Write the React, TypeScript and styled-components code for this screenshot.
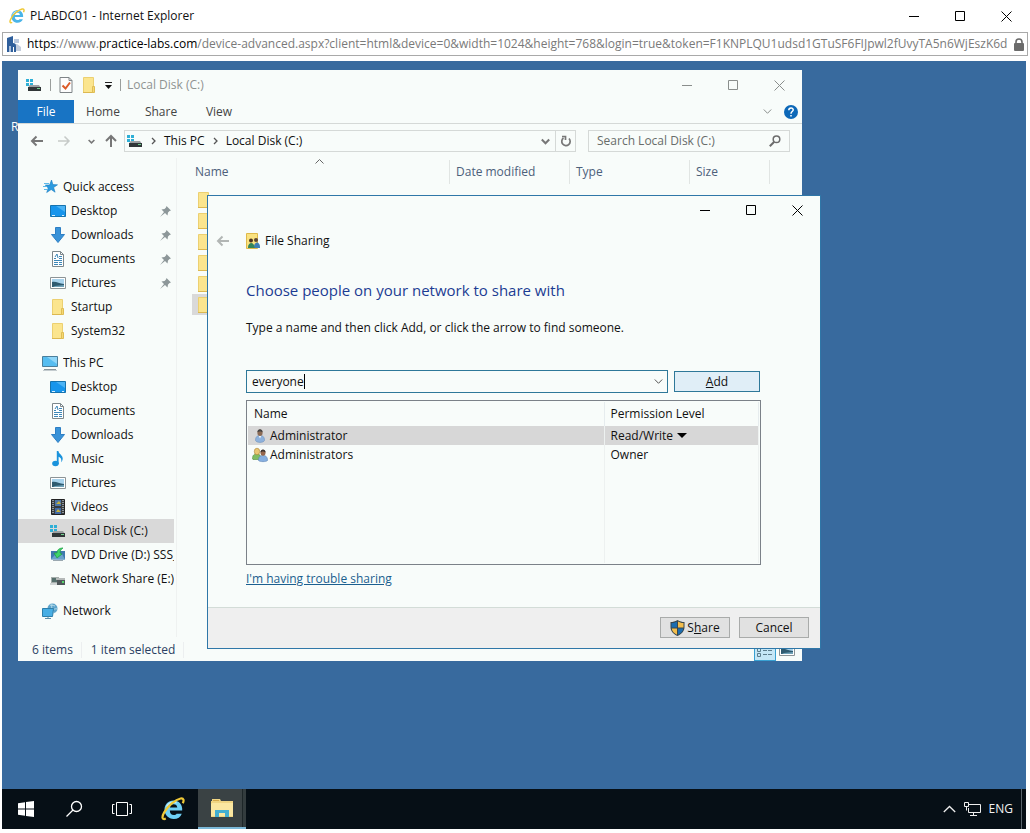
import React, { useState } from "react";
import styled, { createGlobalStyle, css } from "styled-components";

const FONT = `"Open Sans", "Noto Sans", "Liberation Sans", sans-serif`;

const GlobalStyle = createGlobalStyle`
  *, *::before, *::after { box-sizing: border-box; }
  body { margin: 0; background: #fff; }
  body, button, input, select, table { font-family: ${FONT}; font-size: 12px; line-height: 16px; color: #111; }
  button { border: 0; padding: 0; background: none; }
  svg { display: block; flex: none; }
`;

/* ---------- icons ---------- */

const IeLogo = ({ size = 16, tone = "#49b4e8" }: { size?: number; tone?: string }) => (
  <svg width={size} height={size} viewBox="0 0 24 24" fill="none">
    <path d="M3.600 13.600H21.200C21.800 7.200 17.800 3.400 12.600 3.400 7.400 3.400 3.500 7.300 3.500 12.600S7.400 22 12.700 22c4 0 6.800-2 8.100-5.300h-5.200c-.7 1-1.500 1.400-2.800 1.400-2.300 0-3.900-1.500-4-4.500M8.900 10.600c.3-2.100 1.700-3.300 3.800-3.300s3.400 1.200 3.600 3.300z" fill={tone} fillRule="evenodd" />
    <path d="M5.500 9.500c1.500-3.500 5.800-5.300 10-3.800" stroke="#c4ebfa" strokeWidth="1.500" />
    <path d="M4.800 21.600C1.300 23.200.3 20.500 3.200 15.400 6.900 8.900 14.500 2.700 19.600 1.500c3.200-.6 3.600 1.700 2.200 4.800" stroke="#efc937" strokeWidth="2.200" />
  </svg>
);

const SiteIcon = () => (
  <svg width="14" height="16" viewBox="0 0 14 16">
    <path d="M0 2l6-2v16H0z" fill="#2f5f9c" />
    <path d="M7 3h5v4H7z" fill="#b9c8de" />
    <path d="M7 8h3l4 3v4H9v-4H7z" fill="#c3cddd" />
    <path d="M6 7c2 0 3 1 3 3v6H7v-5H6z" fill="#2f5f9c" />
    <path d="M2 10h2v6H2z" fill="#a9bedb" />
  </svg>
);

const LockIcon = () => (
  <svg width="10" height="13" viewBox="0 0 10 13">
    <path d="M2 6V4a3 3 0 0 1 6 0v2" stroke="#6b6b6b" strokeWidth="1.600" fill="none" />
    <rect y="5" width="10" height="8" rx="1" fill="#6b6b6b" />
  </svg>
);

const MinimizeGlyph = () => (
  <svg width="10" height="10" viewBox="0 0 10 10"><path d="M0 5.500h10" stroke="currentColor" /></svg>
);
const MaximizeGlyph = () => (
  <svg width="10" height="10" viewBox="0 0 10 10"><path d="M.5.5h9v9h-9z" stroke="currentColor" fill="none" /></svg>
);
const CloseGlyph = () => (
  <svg width="11" height="11" viewBox="0 0 11 11"><path d="M.5.5l10 10M10.500.5l-10 10" stroke="currentColor" /></svg>
);

const DriveIcon = () => (
  <svg width="16" height="16" viewBox="0 0 16 16">
    <path d="M0 2h3v3H0zM4 2h3v3H4zM0 6h3v3H0zM4 6h3v3H4z" fill="#2eafd6" />
    <path d="M3.500 8H13l2 3H2z" fill="#9ba0a2" />
    <rect x="2" y="10" width="13" height="4" fill="#303638" />
    <rect x="11" y="11" width="3" height="1" fill="#6fd08c" />
  </svg>
);

const PropertiesIcon = () => (
  <svg width="14" height="16" viewBox="0 0 14 16">
    <path d="M1 .5h9l3 3v12H1z" fill="#fdfdfd" stroke="#7e8487" />
    <path d="M10 .5v3h3" fill="none" stroke="#7e8487" />
    <path d="M3.500 8.500l3 3 4.500-6" fill="none" stroke="#dc5a27" strokeWidth="2" />
  </svg>
);

const FolderIcon = () => (
  <svg width="16" height="16" viewBox="0 0 16 16">
    <path d="M2.500.5h10v15h-10z" fill="#fbe58e" stroke="#ecd071" />
    <path d="M2 15.500h11" stroke="#dcb850" />
    <path d="M11.500 9.500h2v6h-2z" fill="#f6d973" stroke="#dfbd55" />
  </svg>
);

const StarIcon = () => (
  <svg width="16" height="16" viewBox="0 0 16 16">
    <path d="M9.500 1l1.400 4.600 4.600.2-3.900 2.700 1.500 4.700-3.900-2.700L4.700 13.500 6.200 9 3.300 6h4.300z" fill="#2c9be0" stroke="#1a7cc0" strokeWidth=".6" />
    <path d="M2 4.500h5M1 7.500h4M2 10.500h3" stroke="#5bb9ea" strokeWidth="1" />
  </svg>
);

const DesktopIcon = () => (
  <svg width="16" height="16" viewBox="0 0 16 16">
    <path d="M.5 2.500h15v11H.5z" fill="#1795ec" stroke="#1673ae" />
    <path d="M6 3h9v6z" fill="#4bb3f5" />
    <path d="M2 12.500h3M12 12.500h2" stroke="#d5efff" />
  </svg>
);

const DownloadIcon = () => (
  <svg width="16" height="16" viewBox="0 0 16 16">
    <path d="M5.500.5h5v7h4L8 15.500 1.500 7.500h4z" fill="#3a93d8" stroke="#2d7fc4" />
  </svg>
);

const DocumentIcon = () => (
  <svg width="16" height="16" viewBox="0 0 16 16">
    <path d="M2.500.5h8l3 3v12h-11z" fill="#fff" stroke="#7d888c" />
    <path d="M10.500.5v3h3" fill="none" stroke="#7d888c" />
    <path d="M4 7.500h2M4 9.500h8M4 11.500h4M9 11.500h3M4 13.500h4M9 13.500h3M9 5.500h3M9 7.500h3" stroke="#3d88b8" />
    <path d="M5 6l2-3 1 4" fill="none" stroke="#3d88b8" />
  </svg>
);

const PictureIcon = () => (
  <svg width="16" height="16" viewBox="0 0 16 16">
    <path d="M.5 2.500h15v11H.5z" fill="#fff" stroke="#8c9496" />
    <path d="M2 4h12v8H2z" fill="#a8d3ec" />
    <path d="M2 7c4-1 7 2 12 2v3H2z" fill="#2f5b70" />
    <path d="M5 11l9-1v2H3z" fill="#6fa2b8" />
  </svg>
);

const MonitorIcon = () => (
  <svg width="16" height="16" viewBox="0 0 16 16">
    <path d="M.5 1.500h15v10H.5z" fill="#56bdf0" stroke="#4b7f9b" />
    <path d="M5 2h10v7z" fill="#8fd6f8" />
    <path d="M2 14.500h12" stroke="#8a979c" />
    <path d="M1 15.500h14" stroke="#c4cccf" />
  </svg>
);

const MusicIcon = () => (
  <svg width="16" height="16" viewBox="0 0 16 16">
    <ellipse cx="5.500" cy="12.500" rx="3.300" ry="2.700" fill="#1a93dc" />
    <path d="M6.800 0h1.600c.3 3 4.300 4 4.300 7.500 0 1.400-.6 2.700-1.500 3.700.7-3-.6-4.700-2.600-5.400V13H6.800z" fill="#1a93dc" />
  </svg>
);

const VideoIcon = () => (
  <svg width="16" height="16" viewBox="0 0 16 16">
    <path d="M1.500.5h13v15h-13z" fill="#363c40" stroke="#222" />
    <path d="M3 1v14M13 1v14" stroke="#e8eef0" strokeDasharray="1 1" />
    <path d="M5 1h6v6H5z" fill="#4e76a8" />
    <path d="M5 9h6v6H5z" fill="#4169a5" />
    <path d="M6 5l3-3 2 3zM6 13l2-3 3 3z" fill="#c5b13b" />
  </svg>
);

const DvdIcon = () => (
  <svg width="16" height="16" viewBox="0 0 16 16">
    <path d="M1 4h14v8.500H1z" fill="#3f79ae" />
    <path d="M1 12l4-4 3 2 4-3 3 5.500z" fill="#69a3cc" />
    <path d="M4 6l3 5 5-4-2-1c0-2 1-4 3-5-4 0-6 2-6 5z" fill="#3ed46a" stroke="#1c9c42" strokeWidth=".7" />
    <path d="M3 13.500h10" stroke="#9aa8b0" />
  </svg>
);

const NetDriveIcon = () => (
  <svg width="16" height="16" viewBox="0 0 16 16">
    <path d="M1 6h8v6H1z" fill="#a5adab" />
    <path d="M2 7h5v4H2z" fill="#56706c" />
    <path d="M6 7h9v2H6z" fill="#b5b9b8" />
    <path d="M7 9h8v5H7z" fill="#50575a" />
    <path d="M12 10h2v2h-2z" fill="#56d56b" />
    <path d="M0 13h7" stroke="#a8aeb0" />
  </svg>
);

const NetworkIcon = () => (
  <svg width="16" height="16" viewBox="0 0 16 16">
    <circle cx="10.500" cy="5.500" r="5" fill="#5ea4cb" />
    <path d="M8 2c2 1 3 0 5 1M7 6c3 2 6-1 8 0M10 1c-1 3 0 6 2 9" stroke="#b6dcea" fill="none" />
    <path d="M.5 5.500h11l-1 8H.5z" fill="#48aee4" stroke="#2d7fab" />
    <path d="M3 15.500h6M6 13.500v2" stroke="#5d8fa8" />
  </svg>
);

const PinIcon = () => (
  <svg width="11" height="11" viewBox="0 0 11 11">
    <path d="M6.500 0L11 4.500 9.500 5 8 6.500 7.500 9.500 5 7 0 11 4 6 1.500 3.500l3-.5L6 1.500z" fill="#8d9799" />
  </svg>
);

const ArrowIcon = ({ up }: { up?: boolean }) => (
  <svg width="14" height="14" viewBox="0 0 14 14" fill="none" stroke="currentColor" strokeWidth="2">
    {up ? <path d="M7 13V2M2 7l5-5 5 5" /> : <path d="M13 7H2M6.500 2.500L2 7l4.500 4.500" />}
  </svg>
);
const ForwardIcon = () => (
  <svg width="14" height="14" viewBox="0 0 14 14" fill="none" stroke="currentColor" strokeWidth="1.500">
    <path d="M1 7h11M7.500 2.500L12 7l-4.500 4.500" />
  </svg>
);

const Chevron = ({ size = 9, weight = 1 }: { size?: number; weight?: number }) => (
  <svg width={size} height={size} viewBox="0 0 9 9" fill="none" stroke="currentColor" strokeWidth={weight}>
    <path d="M.8 2.500l3.700 3.800 3.700-3.800" />
  </svg>
);
const RightChevron = () => (
  <svg width="5" height="8" viewBox="0 0 5 8" fill="none" stroke="#555" strokeWidth="1.300"><path d="M1 1l3 3-3 3" /></svg>
);
const CustomizeIcon = () => (
  <svg width="7" height="8" viewBox="0 0 7 8"><path d="M0 1.500h7" stroke="#222" /><path d="M0 4h7L3.500 8z" fill="#111" /></svg>
);
const HelpIcon = () => (
  <svg width="14" height="14" viewBox="0 0 14 14">
    <circle cx="7" cy="7" r="7" fill="#0d68b8" />
    <path d="M4.800 5.200c0-3 4.600-2.900 4.400-.2C9 6.600 7 6.500 7 8.700M7 10v1.600" stroke="#fff" strokeWidth="1.500" fill="none" />
  </svg>
);
const RefreshIcon = () => (
  <svg width="12" height="12" viewBox="0 0 12 12" fill="none" stroke="#777" strokeWidth="1.700">
    <path d="M3.500 3A4.200 4.200 0 1 0 9 3.500M2 1.500h3.500V5" />
  </svg>
);
const MagnifierIcon = () => (
  <svg width="12" height="12" viewBox="0 0 12 12" fill="none" stroke="#6c6c6c">
    <circle cx="7.500" cy="4.300" r="3.300" strokeWidth="1.500" /><path d="M5 7L.8 11.200" strokeWidth="2" />
  </svg>
);
const SortIcon = () => (
  <svg width="9" height="5" viewBox="0 0 9 5" fill="none" stroke="#666"><path d="M.5 4.500l4-4 4 4" /></svg>
);

const SharingIcon = () => (
  <svg width="14" height="16" viewBox="0 0 14 16">
    <path d="M.5.5h11v15H.5z" fill="#fae27f" stroke="#dfb94a" />
    <circle cx="5" cy="7.500" r="2" fill="#4c3421" />
    <circle cx="10" cy="7" r="2" fill="#5d4632" />
    <path d="M8 14c0-6 6-6 6 0v1H8z" fill="#3f7db5" />
    <path d="M2 14.500c0-6 6.500-6 6.500 0v.5H2z" fill="#35855b" />
  </svg>
);
const UserIcon = () => (
  <svg width="16" height="16" viewBox="0 0 16 16">
    <path d="M3.500 12.500c0-4 2-5 4.500-5s4.500 1 4.500 5c-1 2.500-8 2.500-9 0z" fill="#8eb2dc" stroke="#6e90bb" strokeWidth=".6" />
    <path d="M6.500 7.500l1.500 3 1.500-3z" fill="#eef4fa" />
    <ellipse cx="8" cy="4.800" rx="2.600" ry="3.200" fill="#8b6b55" />
    <path d="M5.400 4.300c0-4 5.200-4 5.200 0L8 3.300z" fill="#434343" />
  </svg>
);
const GroupIcon = () => (
  <svg width="16" height="16" viewBox="0 0 16 16">
    <path d="M.5 12c0-4 1.500-5 4.500-5s4 2 4 5.500H1z" fill="#7fbd62" stroke="#508a3c" strokeWidth=".6" />
    <ellipse cx="5" cy="4.500" rx="2.700" ry="3.300" fill="#e9c774" stroke="#ad8230" strokeWidth=".6" />
    <path d="M6.500 13.500c0-4 2-5 4.500-5s4.500 1 4.500 5c-1 1.500-8 1.500-9 0z" fill="#86afe0" stroke="#5c83b4" strokeWidth=".6" />
    <ellipse cx="11" cy="5.800" rx="2.500" ry="3" fill="#96664b" />
    <path d="M8.400 5.500c0-4 5.200-4 5.200 0L11 4.300z" fill="#3c3431" />
  </svg>
);
const ShieldIcon = () => (
  <svg width="15" height="16" viewBox="0 0 15 16">
    <path d="M7.500 0C5 1.500 3 2 .5 2v5c0 4 2.500 7 7 9 4.500-2 7-5 7-9V2C12 2 10 1.500 7.500 0z" fill="#39464c" />
    <path d="M7 1.500v6H1.500V3C4 3 5.500 2.400 7 1.500zM8 8.500h5.300c-.5 2.900-2.300 4.900-5.300 6.200z" fill="#1c6db0" />
    <path d="M8 1.500v6h5.500V3C11 3 9.500 2.400 8 1.500zM7 8.500H1.700C2.200 11.400 4 13.400 7 14.700z" fill="#f3bd4c" />
  </svg>
);
const TriangleIcon = () => (
  <svg width="10" height="5" viewBox="0 0 10 5"><path d="M0 0h10L5 5z" fill="#000" /></svg>
);
const DetailsViewIcon = () => (
  <svg width="16" height="14" viewBox="0 0 16 14" fill="none" stroke="#5d7d8d">
    <path d="M.5.500h3v3h-3zM.5 5.500h3v3h-3zM.5 10.500h3v3h-3zM6 2.500h4M11 2.500h4M6 7.500h4M11 7.500h4M6 11.500h4M11 11.500h4" />
  </svg>
);

const StartIcon = () => (
  <svg width="16" height="16" viewBox="0 0 16 16" fill="#fff">
    <path d="M0 2.200L7 1.300v6.200H0zM8 1.100L16 0v7.500H8zM0 8.500h7v6.200l-7-.9zM8 8.500h8V16l-8-1.100z" />
  </svg>
);
const TaskSearchIcon = () => (
  <svg width="18" height="18" viewBox="0 0 18 18" fill="none" stroke="#fff" strokeWidth="1.300">
    <circle cx="11.500" cy="6.500" r="5" /><path d="M8 10L1.500 16.500" />
  </svg>
);
const TaskViewIcon = () => (
  <svg width="20" height="14" viewBox="0 0 20 14" fill="none" stroke="#fff">
    <path d="M4.500.5h11v13h-11zM2.500 2.500h-2v9h2M17.500 2.500h2v9h-2" />
  </svg>
);
const ExplorerIcon = () => (
  <svg width="22" height="18" viewBox="0 0 22 18">
    <path d="M0 2h1V0h8l1 2h12v16H0z" fill="#f0d583" />
    <path d="M1 4h21v13H0V5z" fill="#fbe7a1" />
    <path d="M2 1h6v1H2z" fill="#d6a94a" />
    <path d="M4 18v-7h14v7h-4v-4H8v4z" fill="#43aed0" />
  </svg>
);
const TrayUpIcon = () => (
  <svg width="13" height="8" viewBox="0 0 13 8" fill="none" stroke="#eee" strokeWidth="1.300"><path d="M.8 7l5.700-5.500L12.200 7" /></svg>
);
const TrayNetIcon = () => (
  <svg width="17" height="14" viewBox="0 0 17 14" fill="none" stroke="#eee">
    <path d="M5 2.500h11.500v8H4.500V6M9.500 10.500v3M6 13.500h7M.5.500h4v4h-4zM2.500 4.500v4" />
  </svg>
);

/* ---------- browser ---------- */

const Browser = styled.div`
  display: flex;
  flex-direction: column;
  min-height: 100vh;
  padding-bottom: 4px;
`;

const BrowserTitle = styled.header`
  display: flex;
  align-items: center;
  height: 32px;
  padding: 0 1px 0 9px;
  gap: 5px;
`;

const CaptionGroup = styled.div<{ $muted?: boolean }>`
  display: flex;
  margin-left: auto;
  color: ${(p) => (p.$muted ? "#8a8e8c" : "#000")};
`;

const CaptionButton = styled.button`
  display: grid;
  place-items: center;
  width: 46px;
  height: 28px;
  color: inherit;
`;

const CaptionButtons = ({ muted }: { muted?: boolean }) => (
  <CaptionGroup $muted={muted}>
    <CaptionButton aria-label="Minimize"><MinimizeGlyph /></CaptionButton>
    <CaptionButton aria-label="Maximize"><MaximizeGlyph /></CaptionButton>
    <CaptionButton aria-label="Close"><CloseGlyph /></CaptionButton>
  </CaptionGroup>
);

const UrlBar = styled.div`
  display: flex;
  align-items: center;
  height: 24px;
  margin: 0 2px 5px;
  padding: 0 3px 0 4px;
  gap: 6px;
  border: 1px solid #a9a9a9;
`;

const Url = styled.div`
  flex: 1;
  min-width: 0;
  overflow: hidden;
  white-space: nowrap;
  color: #7a7a7a;
  strong { font-weight: 400; color: #000; }
`;

const Desktop = styled.main`
  position: relative;
  flex: 1;
  min-height: 620px;
  margin: 0 4px 0 2px;
  overflow: hidden;
  background: #386a9e;
`;

const DesktopLabel = styled.span`
  position: absolute;
  left: 9px;
  top: 58px;
  color: #fff;
`;

/* ---------- explorer window ---------- */

const Explorer = styled.section`
  position: absolute;
  left: 16px;
  top: 9px;
  width: 784px;
  display: flex;
  flex-direction: column;
  background: #f8fcfa;
`;

const ExplorerTitle = styled.div`
  display: flex;
  align-items: center;
  height: 30px;
  padding-left: 8px;
  color: #8f9391;
`;

const QuickTools = styled.div`
  display: flex;
  align-items: center;
  gap: 8px;
  margin-right: 6px;
`;

const Divider = styled.span`
  width: 1px;
  height: 12px;
  background: #9a9e9c;
`;

const Tabs = styled.nav`
  display: flex;
  height: 24px;
  border-bottom: 1px solid #d5d9d7;
  padding-right: 4px;
`;

const Tab = styled.button<{ $active?: boolean }>`
  width: ${(p) => (p.$active ? 56 : 58)}px;
  height: 23px;
  color: #444;
  ${(p) => p.$active && css`background: #1874c4; color: #fff;`}
`;

const TabTools = styled.div`
  display: flex;
  align-items: center;
  gap: 12px;
  margin-left: auto;
  color: #8b8f8d;
`;

const AddressRow = styled.div`
  display: flex;
  align-items: center;
  height: 34px;
  padding: 0 12px;
  color: #666;
`;

const NavButton = styled.button<{ $width: number; $faint?: boolean }>`
  display: grid;
  place-items: center;
  width: ${(p) => p.$width}px;
  height: 22px;
  color: ${(p) => (p.$faint ? "#c6cac8" : "#777")};
`;

const Crumbs = styled.div`
  display: flex;
  align-items: center;
  flex: 1;
  height: 22px;
  padding-left: 2px;
  gap: 8px;
  border: 1px solid #d5d9d7;
`;

const CrumbTools = styled.div`
  display: flex;
  align-self: stretch;
  margin-left: auto;
`;

const ToolCell = styled.button<{ $ruled?: boolean }>`
  display: grid;
  place-items: center;
  width: 20px;
  color: #777;
  border-left: 1px solid ${(p) => (p.$ruled ? "#d5d9d7" : "transparent")};
`;

const SearchBox = styled.label`
  display: flex;
  align-items: center;
  width: 202px;
  height: 22px;
  margin-left: 12px;
  padding: 0 8px;
  border: 1px solid #d5d9d7;
`;

const SearchInput = styled.input`
  flex: 1;
  min-width: 0;
  padding: 0;
  border: 0;
  outline: 0;
  background: none;
  &::placeholder { color: #686c6a; opacity: 1; }
`;

const ExplorerBody = styled.div`
  display: flex;
  height: 479px;
`;

const Sidebar = styled.nav`
  width: 159px;
  padding: 17px 2px 0 0;
  border-right: 1px solid #eff2f1;
`;

const TreeGroup = styled.div`
  margin-bottom: 8px;
`;

const TreeItem = styled.a<{ $root?: boolean; $selected?: boolean }>`
  display: flex;
  align-items: center;
  height: 24px;
  gap: 5px;
  padding-left: ${(p) => (p.$root ? 24 : 32)}px;
  color: #111;
  text-decoration: none;
  background: ${(p) => (p.$selected ? "#d9d9d9" : "transparent")};
`;

const TreeLabel = styled.span`
  flex: 1;
  overflow: hidden;
  white-space: nowrap;
`;

const PinSlot = styled.span`
  padding-right: 3px;
`;

const FilePane = styled.div`
  position: relative;
  flex: 1;
  padding: 2px 0 0 15px;
`;

const SortMark = styled.span`
  position: absolute;
  left: 138px;
  top: 1px;
`;

const ColumnHeads = styled.div`
  display: grid;
  grid-template-columns: 258px 120px 120px 80px;
  margin-bottom: 5px;
`;

const ColumnHead = styled.button<{ $first?: boolean }>`
  height: 24px;
  padding-left: ${(p) => (p.$first ? 3 : 6)}px;
  text-align: left;
  color: #4c607a;
  border-right: 1px solid #e1e5e3;
`;

const FileRow = styled.button<{ $selected?: boolean }>`
  display: flex;
  align-items: center;
  width: 560px;
  height: 21px;
  padding-left: 4px;
  background: ${(p) => (p.$selected ? "#d9d9d9" : "transparent")};
`;

const StatusBar = styled.footer`
  display: flex;
  align-items: center;
  height: 24px;
  padding: 2px 4px 0 14px;
  color: #2b3f63;
`;

const StatusText = styled.span`
  padding-right: 8px;
  margin-right: 9px;
  border-right: 1px solid #eceff0;
`;

const ViewToggle = styled.button<{ $on?: boolean }>`
  display: grid;
  place-items: center;
  width: 22px;
  height: 22px;
  ${(p) => p.$on && css`background: #c4e6f6; border: 1px solid #38a0d2;`}
`;

const ViewToggles = styled.div`
  display: flex;
  margin-left: auto;
`;

/* ---------- sharing dialog ---------- */

const Dialog = styled.section`
  position: absolute;
  left: 205px;
  top: 134px;
  width: 614px;
  display: flex;
  flex-direction: column;
  border: 1px solid #2f77a8;
  background: #f8fcfa;
`;

const DialogCaption = styled.div`
  display: flex;
  height: 30px;
`;

const DialogTitle = styled.div`
  display: flex;
  align-items: center;
  height: 30px;
  padding-left: 8px;
`;

const BackButton = styled.button`
  width: 30px;
  height: 24px;
  color: #b2b6b4;
`;

const DialogName = styled.span`
  padding-left: 5px;
`;

const DialogBody = styled.div`
  padding: 0 59px 20px 38px;
`;

const Heading = styled.h1`
  margin: 22px 0 18px;
  font-size: 15px;
  line-height: 24px;
  font-weight: 400;
  color: #1c3c93;
`;

const Lead = styled.p`
  margin: 0 0 34px;
`;

const AddRow = styled.div`
  display: flex;
  align-items: center;
  gap: 6px;
  margin-right: 1px;
`;

const Combo = styled.div`
  position: relative;
  display: flex;
  align-items: center;
  flex: 1;
  height: 23px;
  border: 1px solid #2e7899;
`;

const ComboInput = styled.input`
  flex: 1;
  min-width: 0;
  height: 100%;
  padding: 0 5px;
  border: 0;
  outline: 0;
  background: none;
`;

const TextCursor = styled.span`
  position: absolute;
  left: 57px;
  top: 3px;
  width: 1px;
  height: 15px;
  background: #000;
`;

const ComboButton = styled.button`
  display: grid;
  place-items: center;
  width: 18px;
  color: #555;
`;

const PushButton = styled.button<{ $width: number; $default?: boolean }>`
  display: flex;
  align-items: center;
  justify-content: center;
  gap: 2px;
  width: ${(p) => p.$width}px;
  height: 21px;
  background: ${(p) => (p.$default ? "#e0eef7" : "#e1e1e1")};
  border: 1px solid ${(p) => (p.$default ? "#2e7899" : "#a9abaa")};
`;

const ListFrame = styled.div`
  height: 165px;
  margin-top: 7px;
  padding: 1px;
  border: 1px solid #7b8188;
`;

const PeopleTable = styled.table`
  width: 100%;
  height: 100%;
  table-layout: fixed;
  border-collapse: collapse;
`;

const HeadCell = styled.th<{ $wide?: boolean }>`
  width: ${(p) => (p.$wide ? "356px" : "auto")};
  height: 24px;
  padding: 0 6px;
  font-weight: 400;
  text-align: left;
  border-right: 1px solid #e6ecee;
`;

const Row = styled.tr<{ $selected?: boolean }>`
  height: 19px;
  background: ${(p) => (p.$selected ? "#d7d7d7" : "transparent")};
`;

const Cell = styled.td`
  padding: 0 6px;
  vertical-align: middle;
  border-right: 1px solid #edf1f0;
`;

const Person = styled.div`
  display: flex;
  align-items: center;
  gap: 2px;
  margin-left: -2px;
`;

const LevelPicker = styled.span`
  display: flex;
  align-items: center;
  gap: 3px;
`;

const LevelSelect = styled.select`
  appearance: none;
  height: 16px;
  padding: 0;
  border: 0;
  background: none;
`;

const HelpLink = styled.a`
  display: inline-block;
  margin-top: 6px;
  color: #1b5f8f;
`;

const DialogFooter = styled.footer`
  display: flex;
  justify-content: flex-end;
  gap: 9px;
  height: 41px;
  padding: 9px 11px 0;
  border-top: 1px solid #d3dcd7;
  background: #efefef;
`;

/* ---------- taskbar ---------- */

const Taskbar = styled.footer`
  display: flex;
  align-items: stretch;
  gap: 3px;
  height: 40px;
  margin: 0 4px 0 2px;
  background: #060f16;
`;

const TaskGroup = styled.div<{ $spaced?: boolean }>`
  display: flex;
  gap: ${(p) => (p.$spaced ? 1 : 0)}px;
`;

const TaskButton = styled.button<{ $active?: boolean }>`
  display: grid;
  place-items: center;
  width: 48px;
  ${(p) => p.$active && css`
    background: linear-gradient(to right, #3a4244 44px, #1d2628 44px, #1d2628 45px, #333c3e 45px);
    border-bottom: 2px solid #7cb9d9;
  `}
`;

const Tray = styled.div`
  display: flex;
  align-items: center;
  gap: 8px;
  margin-left: auto;
  margin-right: 4px;
  padding-right: 8px;
  border-right: 1px solid #59656c;
  color: #f2f2f2;
`;

/* ---------- data ---------- */

type Item = { label: string; icon: React.ReactNode; pinned?: boolean; selected?: boolean };

const quickAccess: Item[] = [
  { label: "Desktop", icon: <DesktopIcon />, pinned: true },
  { label: "Downloads", icon: <DownloadIcon />, pinned: true },
  { label: "Documents", icon: <DocumentIcon />, pinned: true },
  { label: "Pictures", icon: <PictureIcon />, pinned: true },
  { label: "Startup", icon: <FolderIcon /> },
  { label: "System32", icon: <FolderIcon /> },
];

const thisPc: Item[] = [
  { label: "Desktop", icon: <DesktopIcon /> },
  { label: "Documents", icon: <DocumentIcon /> },
  { label: "Downloads", icon: <DownloadIcon /> },
  { label: "Music", icon: <MusicIcon /> },
  { label: "Pictures", icon: <PictureIcon /> },
  { label: "Videos", icon: <VideoIcon /> },
  { label: "Local Disk (C:)", icon: <DriveIcon />, selected: true },
  { label: "DVD Drive (D:) SSS_X", icon: <DvdIcon /> },
  { label: "Network Share (E:)", icon: <NetDriveIcon /> },
];

const TreeSection = ({ title, icon, items }: { title: string; icon: React.ReactNode; items: Item[] }) => (
  <TreeGroup>
    <TreeItem href="#" $root>{icon}<TreeLabel>{title}</TreeLabel></TreeItem>
    {items.map((item) => (
      <TreeItem key={item.label} href="#" $selected={item.selected}>
        {item.icon}
        <TreeLabel>{item.label}</TreeLabel>
        {item.pinned && <PinSlot><PinIcon /></PinSlot>}
      </TreeItem>
    ))}
  </TreeGroup>
);

const ExplorerWindow = () => (
  <Explorer aria-label="Local Disk (C:)">
    <ExplorerTitle>
      <QuickTools>
        <DriveIcon /><Divider /><PropertiesIcon /><FolderIcon /><CustomizeIcon /><Divider />
      </QuickTools>
      Local Disk (C:)
      <CaptionButtons muted />
    </ExplorerTitle>
    <Tabs>
      <Tab $active>File</Tab>
      <Tab>Home</Tab>
      <Tab>Share</Tab>
      <Tab>View</Tab>
      <TabTools><Chevron /><HelpIcon /></TabTools>
    </Tabs>
    <AddressRow>
      <NavButton $width={14} aria-label="Back"><ArrowIcon /></NavButton>
      <NavButton $width={40} $faint aria-label="Forward"><ForwardIcon /></NavButton>
      <NavButton $width={14} aria-label="Recent locations"><Chevron size={7} weight={2} /></NavButton>
      <NavButton $width={26} aria-label="Up"><ArrowIcon up /></NavButton>
      <Crumbs>
        <DriveIcon /><RightChevron />
        <button>This PC</button><RightChevron />
        <button>Local Disk (C:)</button>
        <CrumbTools>
          <ToolCell aria-label="Previous locations"><Chevron weight={2} /></ToolCell>
          <ToolCell $ruled aria-label="Refresh"><RefreshIcon /></ToolCell>
        </CrumbTools>
      </Crumbs>
      <SearchBox>
        <SearchInput aria-label="Search" placeholder="Search Local Disk (C:)" />
        <MagnifierIcon />
      </SearchBox>
    </AddressRow>
    <ExplorerBody>
      <Sidebar>
        <TreeSection title="Quick access" icon={<StarIcon />} items={quickAccess} />
        <TreeSection title="This PC" icon={<MonitorIcon />} items={thisPc} />
        <TreeSection title="Network" icon={<NetworkIcon />} items={[]} />
      </Sidebar>
      <FilePane>
        <SortMark><SortIcon /></SortMark>
        <ColumnHeads>
          <ColumnHead $first>Name</ColumnHead>
          <ColumnHead>Date modified</ColumnHead>
          <ColumnHead>Type</ColumnHead>
          <ColumnHead>Size</ColumnHead>
        </ColumnHeads>
        {[1, 2, 3, 4, 5, 6].map((n) => (
          <FileRow key={n} $selected={n === 6} aria-label={`Folder ${n}`}><FolderIcon /></FileRow>
        ))}
      </FilePane>
    </ExplorerBody>
    <StatusBar>
      <StatusText>6 items</StatusText>
      <StatusText>1 item selected</StatusText>
      <ViewToggles>
        <ViewToggle $on aria-label="Details view"><DetailsViewIcon /></ViewToggle>
        <ViewToggle aria-label="Thumbnail view"><PictureIcon /></ViewToggle>
      </ViewToggles>
    </StatusBar>
  </Explorer>
);

const SharingDialog = () => {
  const [name, setName] = useState("everyone");
  return (
    <Dialog role="dialog" aria-label="File Sharing">
      <DialogCaption><CaptionButtons /></DialogCaption>
      <DialogTitle>
        <BackButton aria-label="Back"><ArrowIcon /></BackButton>
        <SharingIcon />
        <DialogName>File Sharing</DialogName>
      </DialogTitle>
      <DialogBody>
        <Heading>Choose people on your network to share with</Heading>
        <Lead>Type a name and then click Add, or click the arrow to find someone.</Lead>
        <AddRow>
          <Combo>
            <ComboInput aria-label="Person" value={name} onChange={(e) => setName(e.target.value)} />
            <TextCursor />
            <ComboButton aria-label="Show people"><Chevron /></ComboButton>
          </Combo>
          <PushButton $width={86} $default><span><u>A</u>dd</span></PushButton>
        </AddRow>
        <ListFrame>
          <PeopleTable>
            <thead>
              <tr><HeadCell $wide>Name</HeadCell><HeadCell>Permission Level</HeadCell></tr>
            </thead>
            <tbody>
              <Row $selected>
                <Cell><Person><UserIcon />Administrator</Person></Cell>
                <Cell>
                  <LevelPicker>
                    <LevelSelect aria-label="Permission level"><option>Read/Write</option></LevelSelect>
                    <TriangleIcon />
                  </LevelPicker>
                </Cell>
              </Row>
              <Row><Cell><Person><GroupIcon />Administrators</Person></Cell><Cell>Owner</Cell></Row>
              <tr><Cell /><Cell /></tr>
            </tbody>
          </PeopleTable>
        </ListFrame>
        <HelpLink href="#">I'm having trouble sharing</HelpLink>
      </DialogBody>
      <DialogFooter>
        <PushButton $width={70}><ShieldIcon /><span>S<u>h</u>are</span></PushButton>
        <PushButton $width={70}>Cancel</PushButton>
      </DialogFooter>
    </Dialog>
  );
};

export default function App() {
  return (
    <Browser>
      <GlobalStyle />
      <BrowserTitle>
        <IeLogo />
        <span>PLABDC01 - Internet Explorer</span>
        <CaptionButtons />
      </BrowserTitle>
      <UrlBar>
        <SiteIcon />
        <Url>
          <strong>https</strong>://www.<strong>practice-labs.com</strong>
          /device-advanced.aspx?client=html&amp;device=0&amp;width=1024&amp;height=768&amp;login=true&amp;token=F1KNPLQU1udsd1GTuSF6FIJpwl2fUvyTA5n6WjEszK6d5SHHz
        </Url>
        <LockIcon />
      </UrlBar>
      <Desktop>
        <DesktopLabel>Recycle</DesktopLabel>
        <ExplorerWindow />
        <SharingDialog />
      </Desktop>
      <Taskbar>
        <TaskGroup>
          <TaskButton aria-label="Start"><StartIcon /></TaskButton>
          <TaskButton aria-label="Search"><TaskSearchIcon /></TaskButton>
          <TaskButton aria-label="Task view"><TaskViewIcon /></TaskButton>
        </TaskGroup>
        <TaskGroup $spaced>
          <TaskButton aria-label="Internet Explorer"><IeLogo size={24} tone="#6fd0f5" /></TaskButton>
          <TaskButton $active aria-label="File Explorer"><ExplorerIcon /></TaskButton>
        </TaskGroup>
        <Tray><TrayUpIcon /><TrayNetIcon /><span>ENG</span></Tray>
      </Taskbar>
    </Browser>
  );
}
